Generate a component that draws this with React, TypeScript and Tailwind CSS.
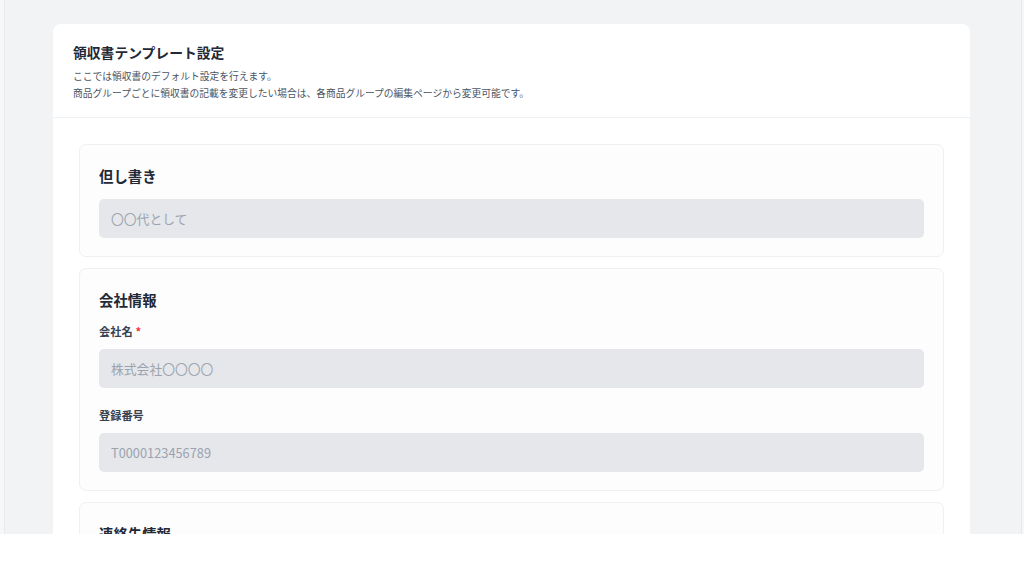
import React from "react";

const font = { fontFamily: '"Noto Sans CJK JP", "Noto Sans", sans-serif' };

interface FieldProps {
  label?: string;
  required?: boolean;
  placeholder: string;
  className?: string;
}

const Field = ({ label, required, placeholder, className }: FieldProps) => (
  <div className={className}>
    {label && (
      <label className="block text-[11.2px] leading-[16px] font-bold text-[#374151] mb-[10px]">
        {label}
        {required && <span className="text-red-500 ml-[3px]">*</span>}
      </label>
    )}
    <input
      readOnly
      placeholder={placeholder}
      className="w-full h-[39px] rounded-[5px] bg-[#e5e7eb] px-[12px] text-[12.8px] text-gray-700 placeholder:text-[#9ca3af] outline-none"
    />
  </div>
);

const Section = ({ title, children }: { title: string; children?: React.ReactNode }) => (
  <section className="rounded-[7px] border border-[#eef0f2] bg-[#fdfdfd] px-[19px] pt-[19px] pb-[18px]">
    <h2 className="text-[14.4px] leading-[24px] font-bold text-[#1f2937]">{title}</h2>
    {children}
  </section>
);

export default function App() {
  return (
    <div style={font} className="h-[534px] overflow-hidden bg-[#f2f3f5] flex">
      <div className="w-[5px] shrink-0 bg-[#f6f7f9] border-r border-[#e8eaee]" />
      <div className="flex-1 pl-[48px] pr-[51px] pt-[24px]">
        <div className="rounded-t-[8px] bg-white min-h-[600px]">
          <div className="px-[20px] pt-[17px] pb-[15px] border-b border-[#f0f1f3]">
            <h1 className="text-[13.8px] leading-[22px] font-bold text-[#1f2937]">領収書テンプレート設定</h1>
            <p className="mt-[5px] text-[9.75px] leading-[17px] text-[#4b5563]">
              ここでは領収書のデフォルト設定を行えます。
              <br />
              商品グループごとに領収書の記載を変更したい場合は、各商品グループの編集ページから変更可能です。
            </p>
          </div>
          <div className="pl-[26px] pr-[26px] pt-[26px] flex flex-col gap-[11px]">
            <Section title="但し書き">
              <Field placeholder="〇〇代として" className="mt-[11px]" />
            </Section>
            <Section title="会社情報">
              <Field label="会社名" required placeholder="株式会社〇〇〇〇" className="mt-[11px]" />
              <Field label="登録番号" placeholder="T0000123456789" className="mt-[19px]" />
            </Section>
            <Section title="連絡先情報" />
          </div>
        </div>
      </div>
      <div className="w-[3px] shrink-0 border-l border-[#e6e8ec] bg-[#f6f7f9]" />
    </div>
  );
}
